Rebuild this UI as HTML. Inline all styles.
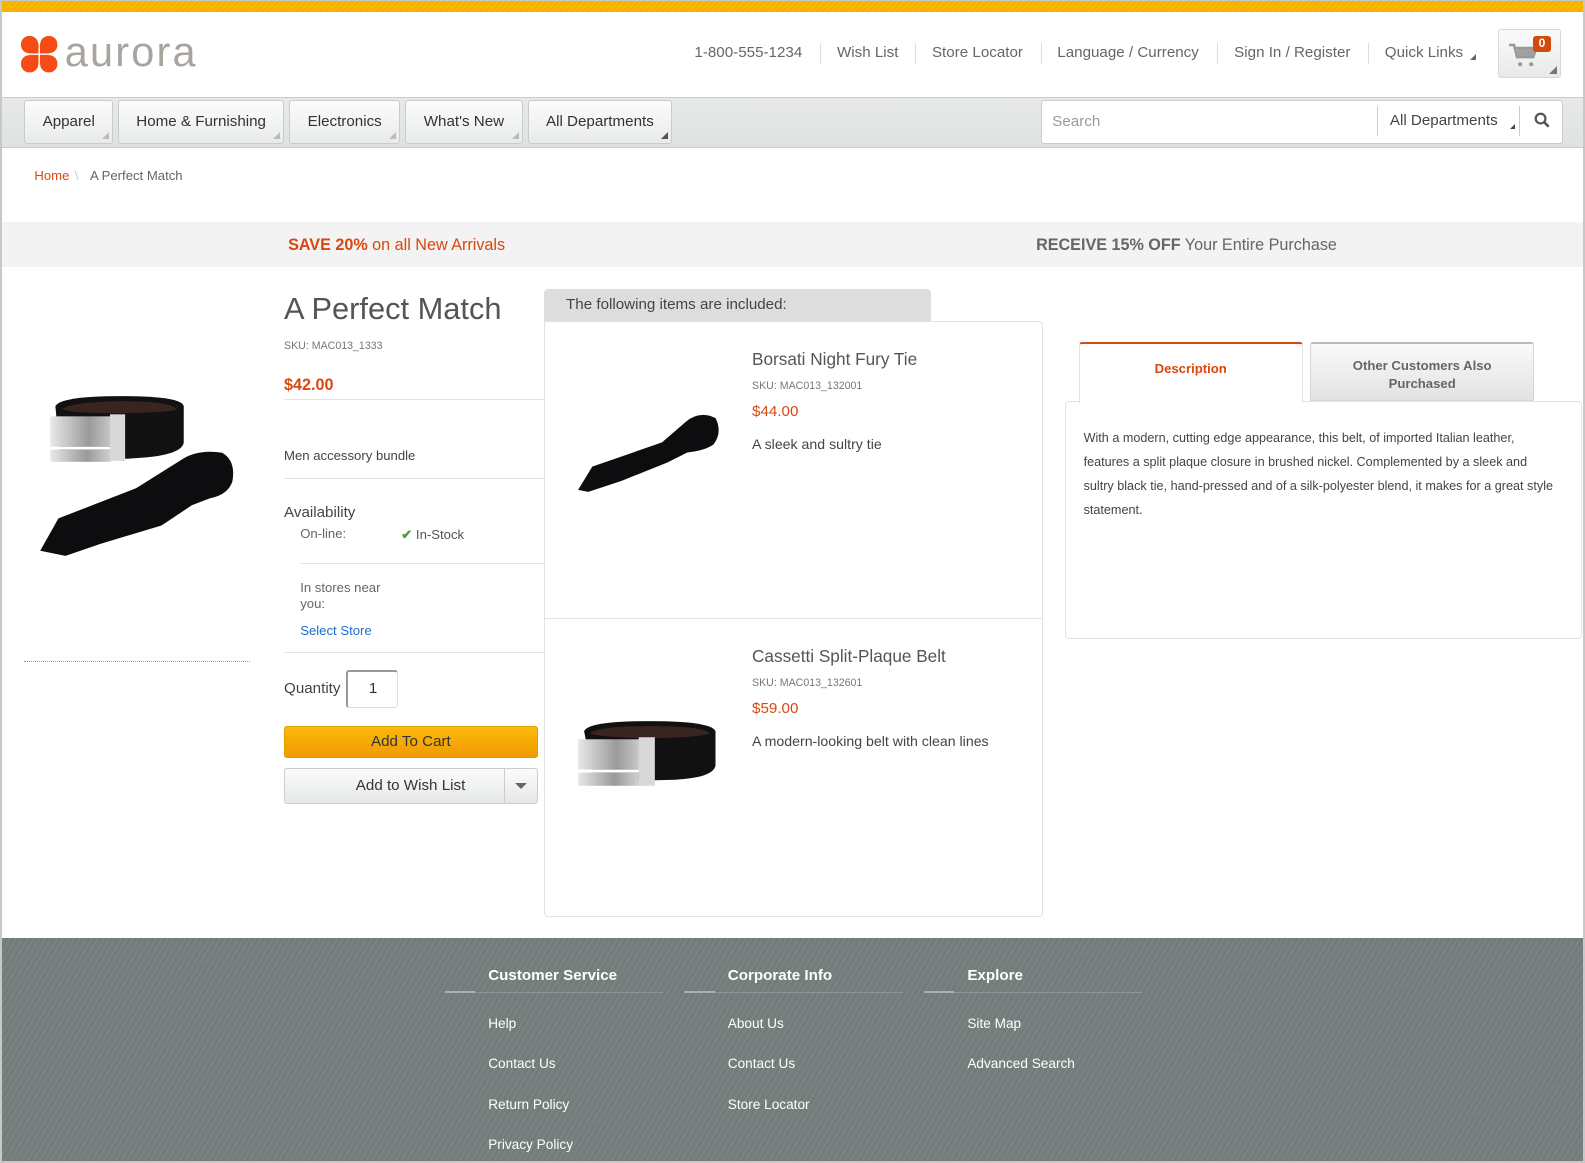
<!DOCTYPE html>
<html><head><meta charset="utf-8">
<style>
*{box-sizing:border-box;margin:0;padding:0}
html,body{width:1585px;height:1163px;overflow:hidden;background:#fff}
#w{position:relative;width:1568px;height:1151px;zoom:1.0108;font-family:"Liberation Sans",Arial,sans-serif;color:#444;background:#fff;overflow:hidden}
.a{position:absolute;white-space:nowrap}
.frame{position:absolute;left:0;top:0;width:1568px;height:1151px;border:2px solid #c8c8c8;border-top:1px solid #c8c8c8;pointer-events:none;z-index:9}
.nav{position:absolute;top:99px;height:43px;border:1px solid #c9cccc;border-radius:3px;background:linear-gradient(#fbfbfb,#e9ebeb);font-size:15px;color:#333;line-height:41px;text-align:center}
.nav i{position:absolute;right:3px;bottom:3px;width:0;height:0;border-left:7px solid transparent;border-bottom:7px solid #bbb}
.tl{font-size:15px;color:#666;top:44px}
.sep{position:absolute;top:43px;width:1px;height:20px;background:#ddd}
.hr{position:absolute;height:1px;background:#e3e3e3}
.fl{position:absolute;color:#fff;font-size:13.5px}
.fh{position:absolute;color:#fff;font-size:15px;font-weight:bold;top:957px}
.fline{position:absolute;top:981px;height:1px;width:216px;background:#8e9696}
.fline b{position:absolute;left:0;top:-1px;width:30px;height:2px;background:#a9b0b0}
</style></head><body>
<div id="w">
<div class="a" style="left:0;top:0;width:1568px;height:12px;background:repeating-linear-gradient(135deg,#fbb800 0 2px,#f5ae00 2px 4px);border-top:1px solid #c8c8c8"></div>
<svg class="a" style="left:21px;top:36px" width="36" height="36" viewBox="0 0 36 36">
<g fill="#f54b14"><rect x="0" y="0" width="17" height="17" rx="8"/><rect x="19" y="0" width="17" height="17" rx="8"/><rect x="0" y="19" width="17" height="17" rx="8"/><rect x="19" y="19" width="17" height="17" rx="8"/>
<rect x="8" y="8" width="20" height="20"/></g><rect x="0" y="17.3" width="36" height="1.4" fill="#fff"/><rect x="17.3" y="0" width="1.4" height="36" fill="#fff"/></svg>
<div class="a" style="left:64px;top:28px;font-size:41px;color:#aaa49f;letter-spacing:2.2px">aurora</div>
<div class="a tl" style="left:687px">1-800-555-1234</div><div class="sep" style="left:811px"></div>
<div class="a tl" style="left:828px">Wish List</div><div class="sep" style="left:905px"></div>
<div class="a tl" style="left:922px">Store Locator</div><div class="sep" style="left:1030px"></div>
<div class="a tl" style="left:1046px">Language / Currency</div><div class="sep" style="left:1204px"></div>
<div class="a tl" style="left:1221px">Sign In / Register</div><div class="sep" style="left:1353px"></div>
<div class="a tl" style="left:1370px">Quick Links</div>
<div class="a" style="left:1454px;top:53px;border-left:6px solid transparent;border-bottom:6px solid #666"></div>
<div class="a" style="left:1482px;top:29px;width:62px;height:48px;border:1px solid #d6d8d8;border-radius:3px;background:linear-gradient(#fafafa,#e8eaea)">
<svg style="position:absolute;left:9px;top:12px" width="30" height="26" viewBox="0 0 30 26"><path d="M1 3h5l3 12h16l3-9H8" fill="none" stroke="#999" stroke-width="2.5"/><rect x="9" y="7" width="17" height="7" fill="#a0a0a0"/><circle cx="12" cy="22" r="2" fill="#999"/><circle cx="23" cy="22" r="2" fill="#999"/></svg>
<div style="position:absolute;left:34px;top:6px;width:17px;height:15px;border-radius:3px;background:#d24a0c;color:#fff;font-size:12px;font-weight:bold;text-align:center;line-height:15px">0</div>
<i style="position:absolute;right:3px;bottom:3px;border-left:8px solid transparent;border-bottom:8px solid #777"></i></div>
<div class="a" style="left:0;top:96px;width:1568px;height:50px;background:linear-gradient(#e8eaea,#dfe2e2);border-top:1px solid #c9cbcb;border-bottom:1px solid #c9cbcb"></div>
<div class="nav" style="left:24px;width:88px">Apparel<i></i></div>
<div class="nav" style="left:117px;width:164px">Home &amp; Furnishing<i></i></div>
<div class="nav" style="left:286px;width:110px">Electronics<i></i></div>
<div class="nav" style="left:401px;width:116px">What's New<i></i></div>
<div class="nav" style="left:522px;width:143px">All Departments<i style="border-bottom-color:#555"></i></div>
<div class="a" style="left:1030px;top:99px;width:516px;height:43px;background:#fff;border:1px solid #c9cccc;border-radius:3px"></div>
<div class="a" style="left:1041px;top:112px;font-size:15px;color:#999">Search</div>
<div class="a" style="left:1362px;top:105px;width:1px;height:30px;background:#ccc"></div>
<div class="a" style="left:1375px;top:111px;font-size:15px;color:#444">All Departments</div>
<div class="a" style="left:1494px;top:123px;border-left:5px solid transparent;border-bottom:5px solid #444"></div>
<div class="a" style="left:1503px;top:105px;width:1px;height:30px;background:#ccc"></div>
<svg class="a" style="left:1518px;top:111px" width="16" height="16" viewBox="0 0 16 16"><circle cx="6.5" cy="6.5" r="4.8" fill="none" stroke="#555" stroke-width="2.2"/><path d="M10 10l4.5 4.5" stroke="#555" stroke-width="2.6"/></svg>
<div class="a" style="left:34px;top:166px;font-size:13px;color:#d9470f">Home</div>
<div class="a" style="left:74px;top:166px;font-size:13px;color:#ccc">\</div>
<div class="a" style="left:89px;top:166px;font-size:13px;color:#666">A Perfect Match</div>
<div class="a" style="left:0;top:220px;width:1568px;height:44px;background:#f3f3f3"></div>
<div class="a" style="left:285px;top:233px;font-size:16px;color:#d9470f"><b>SAVE 20%</b> on all New Arrivals</div>
<div class="a" style="left:1025px;top:233px;font-size:16px;color:#666"><b>RECEIVE 15% OFF</b> Your Entire Purchase</div>
<svg class="a" style="left:20px;top:380px" width="220" height="180" viewBox="0 0 220 180">
<defs><linearGradient id="m" x1="0" x2="1"><stop offset="0" stop-color="#e8e8e8"/><stop offset=".6" stop-color="#9a9a9a"/><stop offset="1" stop-color="#d0d0d0"/></linearGradient></defs>
<path d="M35 22 Q40 12 100 12 Q160 12 162 22 L162 58 Q160 70 120 73 L90 75 L40 75Z" fill="#111"/>
<path d="M42 25 Q50 18 100 17 Q150 17 155 25 Q150 28 100 29 Q50 29 42 25Z" fill="#3a2420"/>
<rect x="30" y="32" width="64" height="30" fill="url(#m)"/><rect x="30" y="62" width="64" height="3" fill="#fff"/><rect x="30" y="65" width="60" height="12" fill="url(#m)"/><rect x="89" y="30" width="15" height="46" fill="#d8d8d8"/>
<path d="M20 165 L38 133 L115 103 L158 76 Q175 64 200 68 Q214 76 210 97 Q205 110 188 113 L170 120 L140 140 L80 158 L45 170Z" fill="#0d0d0f"/>
</svg>
<div class="a" style="left:24px;top:654px;width:223px;border-top:1px dotted #999"></div>
<div class="a" style="left:281px;top:288px;font-size:30.5px;color:#555">A Perfect Match</div>
<div class="a" style="left:281px;top:336px;font-size:10.5px;color:#777">SKU: MAC013_1333</div>
<div class="a" style="left:281px;top:372px;font-size:16px;font-weight:bold;color:#d9470f">$42.00</div>
<div class="hr" style="left:281px;top:395px;width:257px"></div>
<div class="a" style="left:281px;top:443px;font-size:13px;color:#444">Men accessory bundle</div>
<div class="hr" style="left:281px;top:473px;width:257px"></div>
<div class="a" style="left:281px;top:499px;font-size:15px;color:#444">Availability</div>
<div class="a" style="left:297px;top:520px;font-size:13px;color:#666">On-line:</div>
<div class="a" style="left:397px;top:521px;font-size:13px;color:#555"><span style="color:#4aa02c;font-weight:bold">✔</span> In-Stock</div>
<div class="hr" style="left:297px;top:557px;width:241px"></div>
<div class="a" style="left:297px;top:574px;font-size:13px;color:#666;line-height:16px;white-space:normal;width:100px">In stores near you:</div>
<div class="a" style="left:297px;top:616px;font-size:13px;color:#1a6ed8">Select Store</div>
<div class="hr" style="left:281px;top:645px;width:257px"></div>
<div class="a" style="left:281px;top:673px;font-size:15px;color:#444">Quantity</div>
<div class="a" style="left:342px;top:663px;width:52px;height:37px;border:1px solid #ddd;border-left:2px solid #999;border-top:2px solid #999;border-radius:3px;font-size:15px;color:#333;line-height:34px;padding-left:21px">1</div>
<div class="a" style="left:281px;top:718px;width:251px;height:32px;border:1px solid #d9a000;border-radius:3px;background:linear-gradient(#fbbb0a,#f09a00);text-align:center;line-height:30px;font-size:15px;color:#333">Add To Cart</div>
<div class="a" style="left:281px;top:760px;width:251px;height:35px;border:1px solid #ccc;border-radius:3px;background:linear-gradient(#fbfbfb,#e6e8e8);line-height:33px;font-size:15px;color:#333"><span style="position:absolute;left:70px">Add to Wish List</span><span style="position:absolute;left:217px;top:0;width:1px;height:33px;background:#ccc"></span><span style="position:absolute;left:228px;top:14px;border-left:6px solid transparent;border-right:6px solid transparent;border-top:6px solid #666"></span></div>
<div class="a" style="left:538px;top:286px;width:383px;height:33px;background:#ddd;border-radius:4px 4px 0 0;font-size:15px;color:#444;padding:7px 0 0 22px">The following items are included:</div>
<div class="a" style="left:538px;top:318px;width:494px;height:589px;border:1px solid #e3e3e3;border-radius:0 4px 4px 4px"></div>
<div class="hr" style="left:539px;top:611px;width:492px"></div>
<svg class="a" style="left:560px;top:400px" width="160" height="100" viewBox="0 0 160 100">
<path d="M12 85 L26 62 L95 38 L118 18 Q132 6 148 14 Q155 28 146 40 Q138 46 120 48 L100 58 L55 76 L22 87Z" fill="#0d0d0f"/></svg>
<svg class="a" style="left:568px;top:705px" width="150" height="80" viewBox="0 0 150 80">
<defs><linearGradient id="m2" x1="0" x2="1"><stop offset="0" stop-color="#e8e8e8"/><stop offset=".6" stop-color="#9a9a9a"/><stop offset="1" stop-color="#d0d0d0"/></linearGradient></defs>
<path d="M10 18 Q14 8 75 8 Q136 8 140 18 L140 52 Q138 64 100 66 L20 68Z" fill="#111"/>
<path d="M16 20 Q25 13 75 13 Q128 13 134 20 Q128 24 75 25 Q25 24 16 20Z" fill="#3a2420"/>
<rect x="4" y="26" width="64" height="30" fill="url(#m2)"/><rect x="4" y="56" width="64" height="3" fill="#fff"/><rect x="4" y="59" width="60" height="13" fill="url(#m2)"/><rect x="64" y="24" width="16" height="48" fill="#d8d8d8"/></svg>
<div class="a" style="left:744px;top:345px;font-size:17px;color:#555">Borsati Night Fury Tie</div>
<div class="a" style="left:744px;top:376px;font-size:10.5px;color:#777">SKU: MAC013_132001</div>
<div class="a" style="left:744px;top:399px;font-size:15px;color:#d9470f">$44.00</div>
<div class="a" style="left:744px;top:431px;font-size:14px;color:#444">A sleek and sultry tie</div>
<div class="a" style="left:744px;top:639px;font-size:17px;color:#555">Cassetti Split-Plaque Belt</div>
<div class="a" style="left:744px;top:670px;font-size:10.5px;color:#777">SKU: MAC013_132601</div>
<div class="a" style="left:744px;top:693px;font-size:15px;color:#d9470f">$59.00</div>
<div class="a" style="left:744px;top:725px;font-size:14px;color:#444">A modern-looking belt with clean lines</div>
<div class="a" style="left:1054px;top:397px;width:511px;height:235px;border:1px solid #e3e3e3;border-radius:4px"></div>
<div class="a" style="left:1067px;top:338px;width:222px;height:61px;background:#fff;border:1px solid #e3e3e3;border-top:2px solid #d24a0c;border-bottom:none;border-radius:3px 3px 0 0;text-align:center;font-size:13px;font-weight:bold;color:#d9470f;padding-top:17px">Description</div>
<div class="a" style="left:1296px;top:338px;width:222px;height:59px;background:linear-gradient(#fafafa,#e2e2e2);border:1px solid #d6d6d6;border-top:2px solid #bbb;border-radius:3px 3px 0 0;text-align:center;font-size:13px;font-weight:bold;color:#666;padding-top:13px;line-height:18px;white-space:normal">Other Customers Also<br>Purchased</div>
<div class="a" style="left:1072px;top:421px;width:470px;font-size:12.5px;line-height:24px;color:#444;white-space:normal">With a modern, cutting edge appearance, this belt, of imported Italian leather, features a split plaque closure in brushed nickel. Complemented by a sleek and sultry black tie, hand-pressed and of a silk-polyester blend, it makes for a great style statement.</div>
<div class="a" style="left:0;top:928px;width:1568px;height:223px;background:repeating-linear-gradient(120deg,#737b7b 0 3px,#7a8282 3px 5px)"></div>
<div class="fh" style="left:483px">Customer Service</div>
<div class="fh" style="left:720px">Corporate Info</div>
<div class="fh" style="left:957px">Explore</div>
<div class="fline" style="left:440px"><b></b></div>
<div class="fline" style="left:677px"><b></b></div>
<div class="fline" style="left:914px"><b></b></div>
<div class="fl" style="left:483px;top:1005px">Help</div>
<div class="fl" style="left:483px;top:1045px">Contact Us</div>
<div class="fl" style="left:483px;top:1085px">Return Policy</div>
<div class="fl" style="left:483px;top:1125px">Privacy Policy</div>
<div class="fl" style="left:720px;top:1005px">About Us</div>
<div class="fl" style="left:720px;top:1045px">Contact Us</div>
<div class="fl" style="left:720px;top:1085px">Store Locator</div>
<div class="fl" style="left:957px;top:1005px">Site Map</div>
<div class="fl" style="left:957px;top:1045px">Advanced Search</div>
<div class="frame"></div>
</div>
</body></html>
